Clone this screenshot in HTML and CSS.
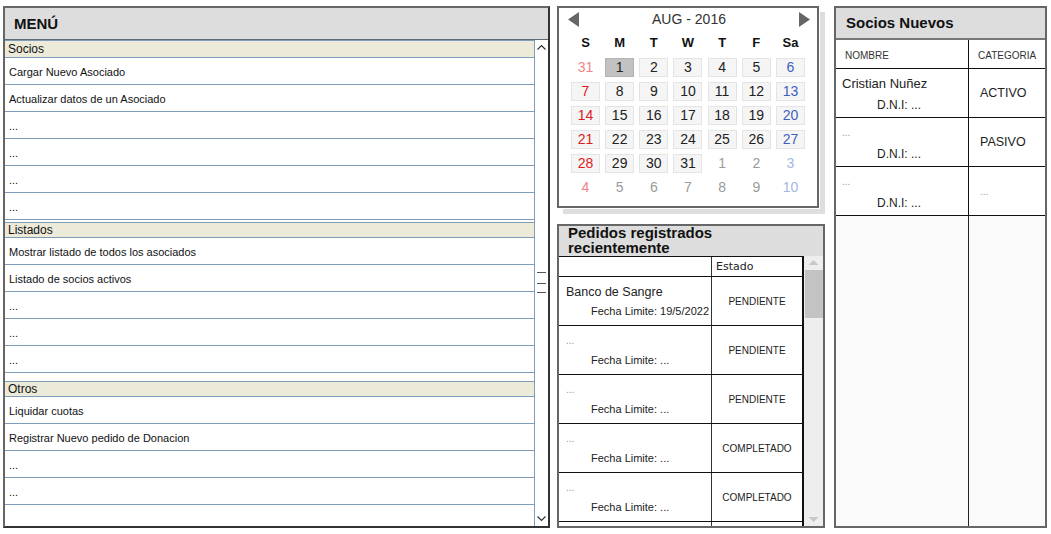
FILE: index.html
```html
<!DOCTYPE html>
<html lang="es">
<head>
<meta charset="utf-8">
<title>Panel</title>
<link rel="stylesheet" href="styles.css">
</head>
<body>
<div class="page">
  <section class="menu">
    <div class="menu-head">MENÚ</div>
    <div class="menu-body">
      <div class="menu-list">
        <div class="sec sec-first">Socios</div>
        <div class="item">Cargar Nuevo Asociado</div>
        <div class="item">Actualizar datos de un Asociado</div>
        <div class="item">...</div>
        <div class="item">...</div>
        <div class="item">...</div>
        <div class="item">...</div>
        <div class="gap2"></div>
        <div class="sec">Listados</div>
        <div class="item">Mostrar listado de todos los asociados</div>
        <div class="item">Listado de socios activos</div>
        <div class="item">...</div>
        <div class="item">...</div>
        <div class="item">...</div>
        <div class="gap8"></div>
        <div class="sec">Otros</div>
        <div class="item">Liquidar cuotas</div>
        <div class="item">Registrar Nuevo pedido de Donacion</div>
        <div class="item">...</div>
        <div class="item">...</div>
      </div>
      <div class="vscroll">
        <svg class="chev" width="11" height="14" viewBox="0 0 11 14"><polyline points="1.5,9.5 5.5,5.5 9.5,9.5" fill="none" stroke="#333" stroke-width="1.2"/></svg>
        <svg class="grip" width="9" height="22" viewBox="0 0 9 22"><line x1="0" y1="0.5" x2="9" y2="0.5" stroke="#555"/><line x1="0" y1="11.5" x2="9" y2="11.5" stroke="#555"/><line x1="0" y1="20.5" x2="9" y2="20.5" stroke="#555"/></svg>
        <svg class="chev" width="11" height="14" viewBox="0 0 11 14"><polyline points="1.5,4.5 5.5,8.5 9.5,4.5" fill="none" stroke="#333" stroke-width="1.2"/></svg>
      </div>
    </div>
  </section>

  <div class="mid">
    <div class="cal">
      <div class="cal-head">
        <svg width="11" height="15" viewBox="0 0 11 15"><polygon points="11,0 11,15 0,7.5" fill="#666"/></svg>
        <span class="cal-title">AUG - 2016</span>
        <svg width="11" height="15" viewBox="0 0 11 15"><polygon points="0,0 0,15 11,7.5" fill="#666"/></svg>
      </div>
      <div class="cal-names">
        <span>S</span><span>M</span><span>T</span><span>W</span><span>T</span><span>F</span><span>Sa</span>
      </div>
      <div class="cal-grid">
        <span class="o sun">31</span><span class="d sel">1</span><span class="d">2</span><span class="d">3</span><span class="d">4</span><span class="d">5</span><span class="d sat">6</span>
        <span class="d sun">7</span><span class="d">8</span><span class="d">9</span><span class="d">10</span><span class="d">11</span><span class="d">12</span><span class="d sat">13</span>
        <span class="d sun">14</span><span class="d">15</span><span class="d">16</span><span class="d">17</span><span class="d">18</span><span class="d">19</span><span class="d sat">20</span>
        <span class="d sun">21</span><span class="d">22</span><span class="d">23</span><span class="d">24</span><span class="d">25</span><span class="d">26</span><span class="d sat">27</span>
        <span class="d sun">28</span><span class="d">29</span><span class="d">30</span><span class="d">31</span><span class="o">1</span><span class="o">2</span><span class="o sat">3</span>
        <span class="o sun">4</span><span class="o">5</span><span class="o">6</span><span class="o">7</span><span class="o">8</span><span class="o">9</span><span class="o sat">10</span>
      </div>
    </div>

    <section class="pedidos">
      <div class="ped-head"><div class="ped-title">Pedidos registrados recientemente</div></div>
      <div class="ped-body">
        <div class="ped-table">
          <div class="ped-row ped-hrow">
            <div class="c-name"></div>
            <div class="c-state c-state-h">Estado</div>
          </div>
          <div class="ped-row">
            <div class="c-name"><div class="p-title">Banco de Sangre</div><div class="p-sub">Fecha Limite: 19/5/2022</div></div>
            <div class="c-state">PENDIENTE</div>
          </div>
          <div class="ped-row">
            <div class="c-name"><div class="p-title dots">...</div><div class="p-sub">Fecha Limite: ...</div></div>
            <div class="c-state">PENDIENTE</div>
          </div>
          <div class="ped-row">
            <div class="c-name"><div class="p-title dots">...</div><div class="p-sub">Fecha Limite: ...</div></div>
            <div class="c-state">PENDIENTE</div>
          </div>
          <div class="ped-row">
            <div class="c-name"><div class="p-title dots">...</div><div class="p-sub">Fecha Limite: ...</div></div>
            <div class="c-state">COMPLETADO</div>
          </div>
          <div class="ped-row">
            <div class="c-name"><div class="p-title dots">...</div><div class="p-sub">Fecha Limite: ...</div></div>
            <div class="c-state">COMPLETADO</div>
          </div>
          <div class="ped-row">
            <div class="c-name"></div>
            <div class="c-state"></div>
          </div>
        </div>
        <div class="ped-scroll">
          <svg class="tri" width="19" height="14" viewBox="0 0 19 14"><polygon points="4.5,9 14.5,9 9.5,4" fill="#c8c8c8"/></svg>
          <div class="thumb"></div>
          <div class="track"></div>
          <svg class="tri" width="19" height="14" viewBox="0 0 19 14"><polygon points="4.5,5 14.5,5 9.5,10" fill="#c8c8c8"/></svg>
        </div>
      </div>
    </section>
  </div>

  <section class="socios">
    <div class="soc-head">Socios Nuevos</div>
    <div class="soc-table">
      <div class="soc-row soc-hrow">
        <div class="s-name">NOMBRE</div>
        <div class="s-cat">CATEGORIA</div>
      </div>
      <div class="soc-row">
        <div class="s-name"><div class="s-title">Cristian Nuñez</div><div class="s-sub">D.N.I: ...</div></div>
        <div class="s-cat">ACTIVO</div>
      </div>
      <div class="soc-row">
        <div class="s-name"><div class="s-title dots">...</div><div class="s-sub">D.N.I: ...</div></div>
        <div class="s-cat">PASIVO</div>
      </div>
      <div class="soc-row">
        <div class="s-name"><div class="s-title dots">...</div><div class="s-sub">D.N.I: ...</div></div>
        <div class="s-cat dots">...</div>
      </div>
      <div class="soc-row soc-fill">
        <div class="s-name"></div>
        <div class="s-cat"></div>
      </div>
    </div>
  </section>
</div>
</body>
</html>
```

FILE: styles.css
```css
html, body {
  margin: 0;
  background: #ffffff;
}

body {
  font-family: "Liberation Sans", Arial, sans-serif;
  color: #222;
}

.page {
  display: flex;
  align-items: flex-start;
  padding: 6px 0 0 3px;
}

/* ---------- MENU ---------- */
.menu {
  width: 547px;
  height: 522px;
  box-sizing: border-box;
  border: 2px solid #666;
  border-right-color: #333;
  border-bottom-color: #333;
  display: flex;
  flex-direction: column;
}

.menu-head {
  height: 31px;
  line-height: 31px;
  background: #dddddd;
  border-bottom: 1px solid #5c6a78;
  padding-left: 9px;
  font-size: 15px;
  font-weight: bold;
  color: #111;
}

.menu-body {
  flex: 1;
  display: flex;
  min-height: 0;
}

.menu-list {
  flex: 1;
  border-right: 1px solid #7f9db9;
}

.sec {
  height: 14px;
  line-height: 15px;
  background: #ecead9;
  border-top: 1px solid #7f9db9;
  border-bottom: 1px solid #7f9db9;
  padding-left: 3px;
  font-size: 12px;
  color: #111;
}

.sec-first {
  height: 16px;
  line-height: 17px;
}

.item {
  height: 25px;
  padding-top: 1px;
  line-height: 26px;
  border-bottom: 1px solid #7f9db9;
  padding-left: 4px;
  font-size: 11px;
  color: #111;
}

.gap2 { height: 2px; }
.gap8 { height: 8px; }

.vscroll {
  width: 13px;
  display: flex;
  flex-direction: column;
  justify-content: space-between;
  align-items: center;
  background: #fff;
}

.chev { display: block; }
.grip { display: block; }

/* ---------- MIDDLE COLUMN ---------- */
.mid {
  display: flex;
  flex-direction: column;
  gap: 16px;
  margin-left: 7px;
  width: 268px;
}

.cal {
  width: 262px;
  height: 202px;
  box-sizing: border-box;
  border: 2px solid #666;
  background: #fff;
  box-shadow: 1px 1px 0 #fff, 6px 6px 0 #dedede;
}

.cal-head {
  height: 22px;
  display: flex;
  align-items: center;
  justify-content: space-between;
  padding: 0 7px 0 9px;
}

.cal-head svg { display: block; }

.cal-title {
  font-size: 14px;
  color: #333;
}

.cal-names,
.cal-grid {
  display: grid;
  grid-template-columns: repeat(7, 29px);
  column-gap: 5.17px;
  margin-left: 12px;
}

.cal-names {
  height: 25px;
  align-items: center;
  text-align: center;
  font-size: 13px;
  font-weight: bold;
  color: #111;
}

.cal-grid {
  margin-top: 3px;
  row-gap: 5px;
  grid-auto-rows: 19px;
}

.cal-grid span {
  box-sizing: border-box;
  height: 19px;
  line-height: 17px;
  text-align: center;
  font-size: 14px;
  border: 1px solid transparent;
}

.cal-grid .d {
  background: #f5f5f5;
  border-color: #e4e4e4;
  color: #222;
}

.cal-grid .d.sel {
  background: #c2c2c2;
  border-color: #b3b3b3;
}

.cal-grid .d.sun { color: #dc1c1c; }
.cal-grid .d.sat { color: #3d60c0; }

.cal-grid .o { color: #9a9a9a; }
.cal-grid .o.sun { color: #ef8585; }
.cal-grid .o.sat { color: #a5b6e4; }

/* ---------- PEDIDOS ---------- */
.pedidos {
  height: 304px;
  box-sizing: border-box;
  border: 2px solid #666;
  display: flex;
  flex-direction: column;
}

.ped-head {
  height: 30px;
  background: #dddddd;
  padding-left: 9px;
  overflow: visible;
}

.ped-title {
  width: 170px;
  font-size: 15px;
  line-height: 15px;
  margin-top: -1px;
  font-weight: bold;
  color: #111;
}

.ped-body {
  flex: 1;
  display: flex;
  min-height: 0;
  overflow: hidden;
}

.ped-table {
  width: 245px;
  box-sizing: border-box;
  border-top: 1px solid #111;
  border-right: 2px solid #111;
  background: #fff;
}

.ped-row {
  display: flex;
  height: 48px;
  border-bottom: 1px solid #111;
}

.ped-hrow { height: 19px; }

.c-name {
  width: 153px;
  border-right: 1px solid #333;
  padding-left: 7px;
  box-sizing: border-box;
  flex: none;
}

.c-state {
  flex: 1;
  display: flex;
  align-items: center;
  justify-content: center;
  font-size: 10px;
  color: #222;
}

.c-state-h {
  justify-content: flex-start;
  padding-left: 4px;
  font-family: "DejaVu Sans", sans-serif;
  font-size: 11px;
  color: #222;
}

.p-title {
  margin-top: 7px;
  line-height: 16px;
  height: 16px;
  font-size: 12.5px;
  color: #222;
}

.p-sub {
  margin-top: 5px;
  line-height: 12px;
  padding-left: 25px;
  font-size: 11px;
  color: #222;
}

.dots {
  font-size: 10px;
  color: #999;
}

.ped-scroll {
  width: 19px;
  background: #eeeeee;
  display: flex;
  flex-direction: column;
}

.ped-scroll .tri { display: block; flex: none; }

.thumb {
  height: 48px;
  margin-left: 1px;
  background: #c3c3c3;
  flex: none;
}

.track { flex: 1; }

/* ---------- SOCIOS NUEVOS ---------- */
.socios {
  margin-left: 9px;
  width: 213px;
  height: 522px;
  box-sizing: border-box;
  border: 2px solid #666;
  display: flex;
  flex-direction: column;
}

.soc-head {
  height: 30px;
  line-height: 30px;
  background: #dddddd;
  border-bottom: 2px solid #777;
  padding-left: 10px;
  font-size: 15px;
  font-weight: bold;
  color: #111;
}

.soc-table {
  flex: 1;
  display: flex;
  flex-direction: column;
  background: #fafafa;
}

.soc-row {
  display: flex;
  height: 48px;
  border-bottom: 1px solid #111;
  background: #fff;
}

.s-name {
  width: 133px;
  box-sizing: border-box;
  border-right: 1px solid #111;
  padding-left: 6px;
  flex: none;
}

.s-cat {
  flex: 1;
  display: flex;
  align-items: center;
  padding-left: 11px;
  font-size: 12.5px;
  color: #222;
}

.soc-hrow {
  height: 28px;
}

.soc-hrow .s-name,
.soc-hrow .s-cat {
  display: flex;
  align-items: center;
  padding-top: 2px;
  box-sizing: border-box;
  padding-left: 9px;
  font-size: 10px;
  color: #333;
}

.s-cat.dots {
  font-size: 10px;
  color: #999;
}

.s-title {
  margin-top: 7px;
  height: 16px;
  line-height: 16px;
  font-size: 13px;
  color: #222;
}

.s-title.dots {
  font-size: 10px;
  color: #999;
}

.s-sub {
  margin-top: 6px;
  line-height: 14px;
  padding-left: 35px;
  font-size: 12px;
  color: #222;
}

.soc-fill {
  flex: 1;
  border-bottom: none;
  background: #fafafa;
}

.soc-fill .s-name {
  border-right-color: #222;
}
```
